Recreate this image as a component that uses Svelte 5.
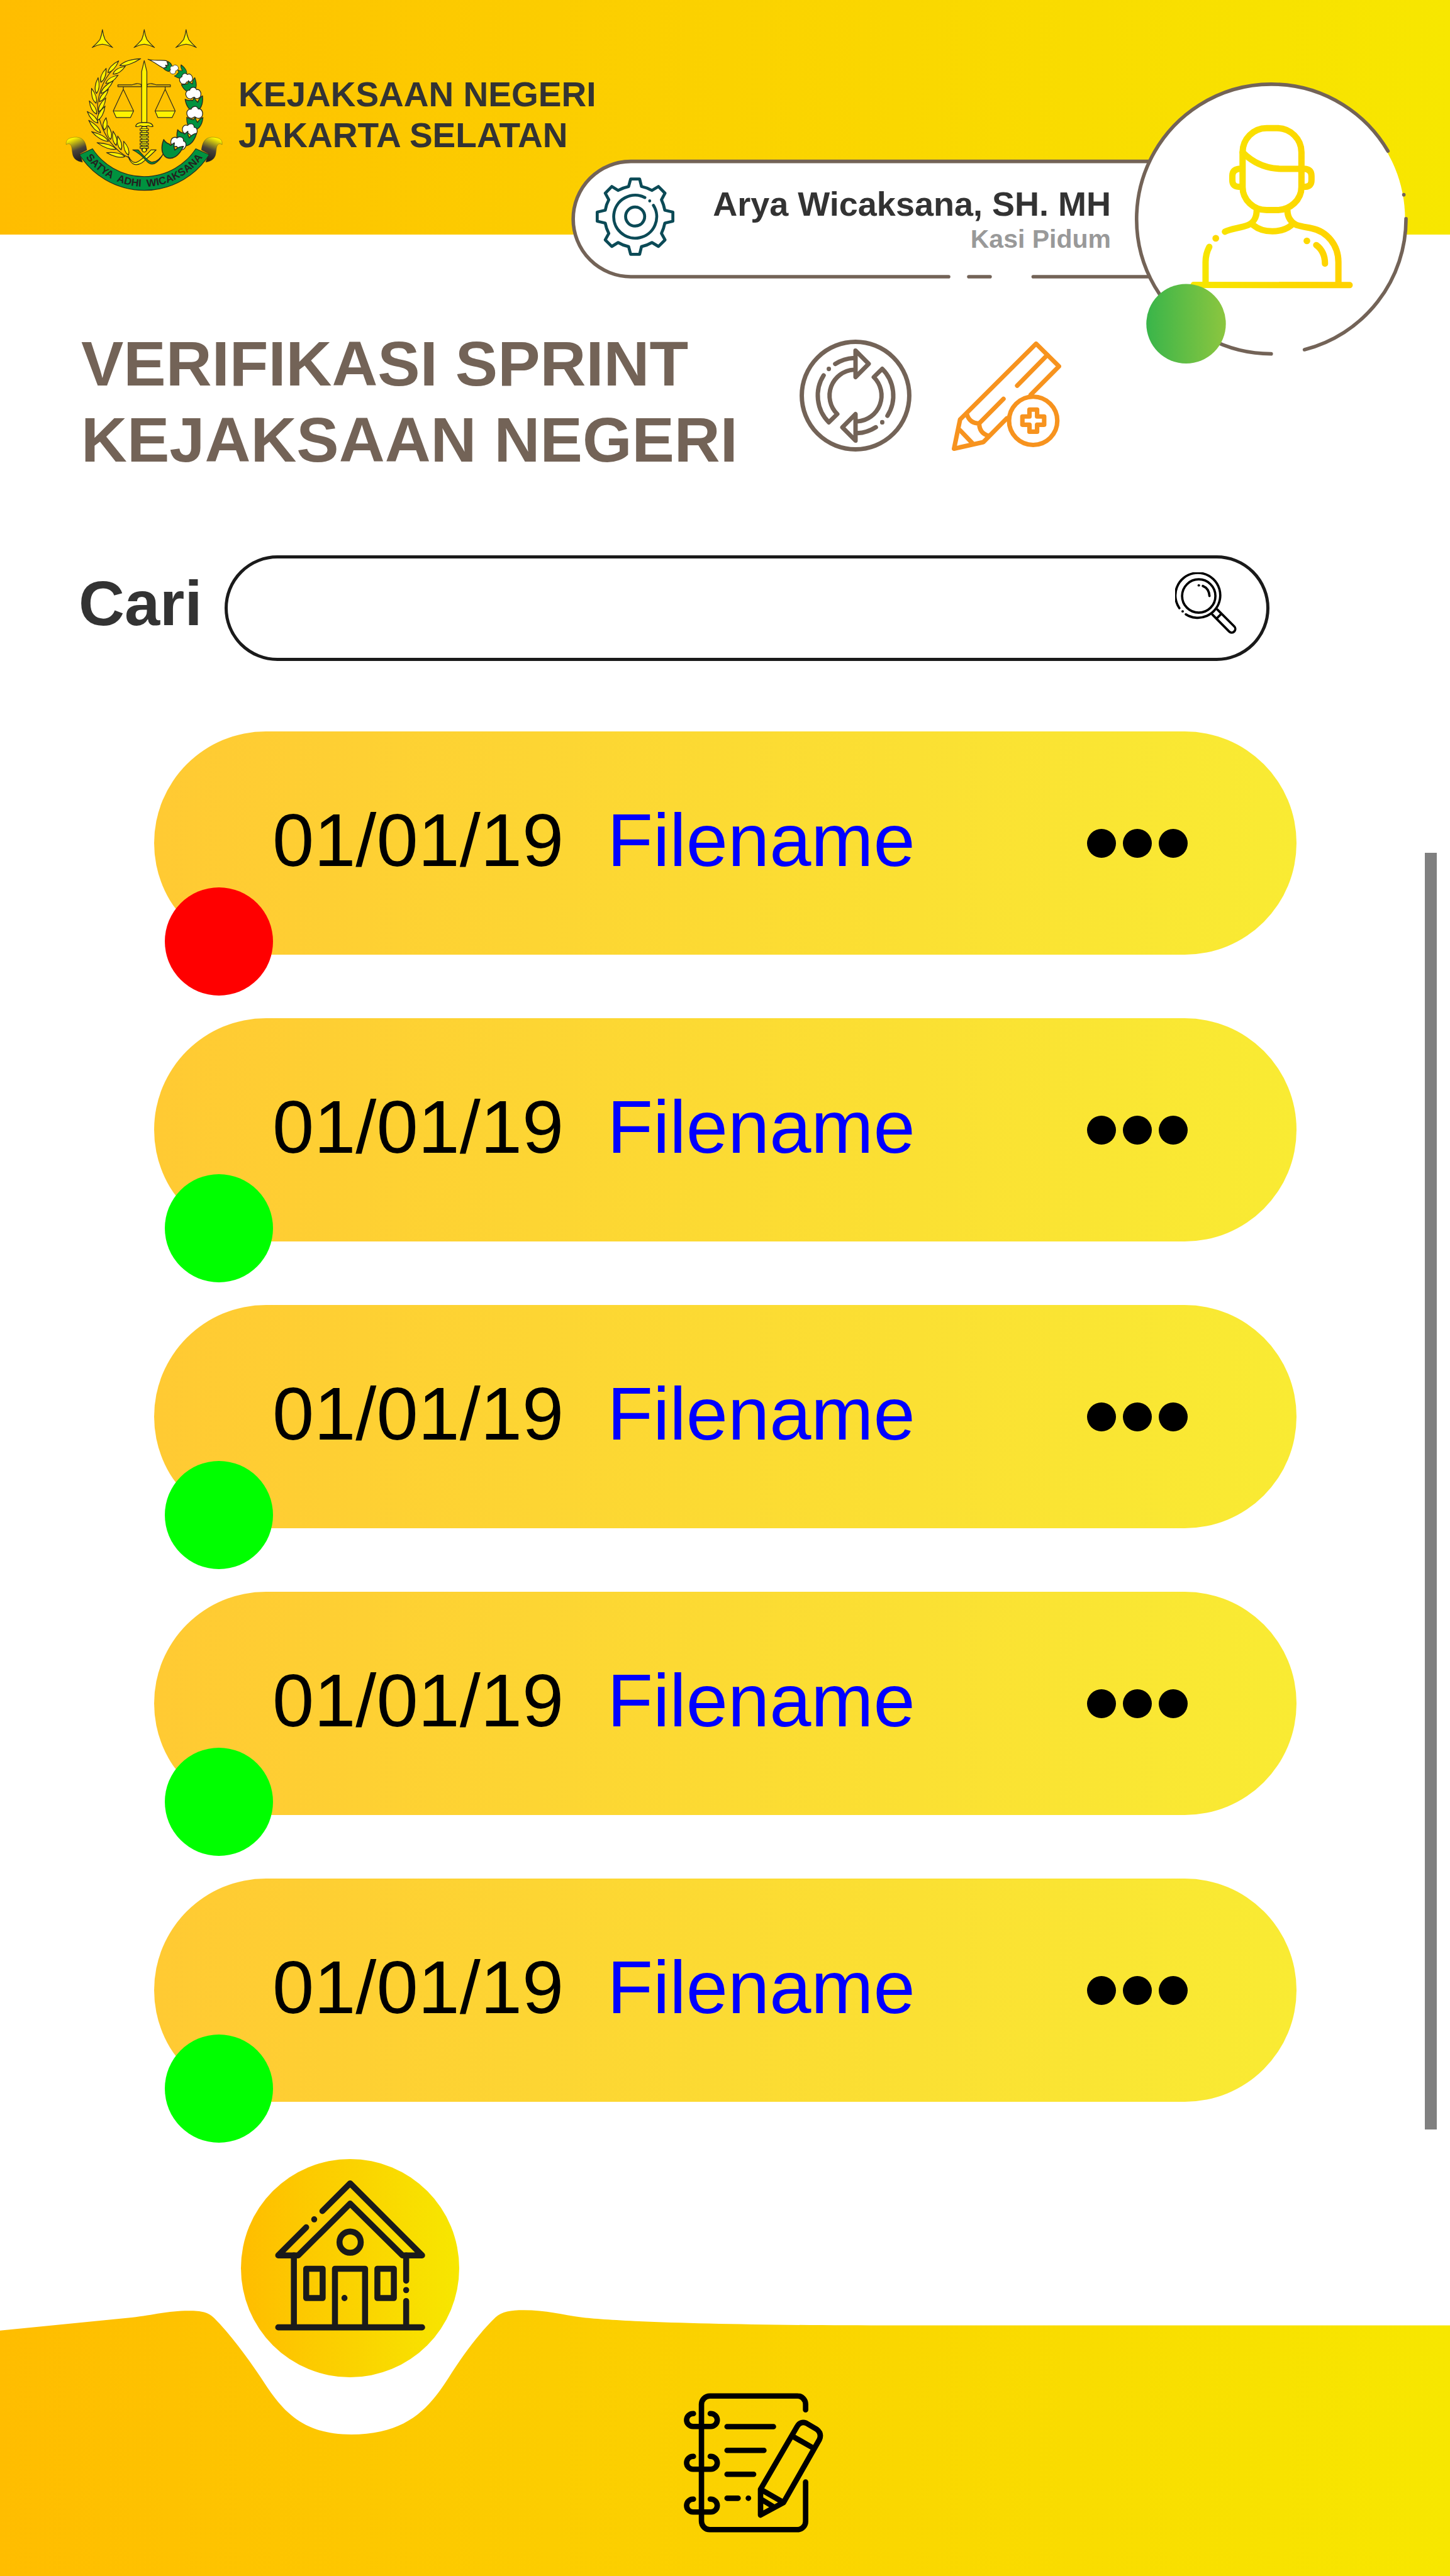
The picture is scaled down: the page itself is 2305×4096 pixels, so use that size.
<script>
  const files = [
    { date: '01/01/19', name: 'Filename', status: 'pending' },
    { date: '01/01/19', name: 'Filename', status: 'verified' },
    { date: '01/01/19', name: 'Filename', status: 'verified' },
    { date: '01/01/19', name: 'Filename', status: 'verified' },
    { date: '01/01/19', name: 'Filename', status: 'verified' }
  ];

  let query = $state('');

  // Wheat grains of the emblem: base x, base y, tip x, tip y
  const grains = [
    [278, 300, 335, 238], [240, 352, 268, 278], [216, 412, 225, 328],
    [214, 464, 190, 385], [217, 522, 178, 452], [224, 570, 167, 509],
    [238, 622, 175, 556], [280, 668, 191, 617], [322, 710, 220, 676],
    [368, 750, 271, 729], [342, 262, 452, 226], [305, 308, 371, 266],
    [266, 358, 332, 314], [240, 412, 306, 344], [232, 456, 280, 390],
    [228, 510, 266, 436], [222, 556, 262, 480], [258, 608, 268, 542],
    [292, 658, 278, 584], [322, 690, 305, 614], [348, 714, 330, 640],
    [388, 742, 362, 668]
  ].map(([x, y, tx, ty]) => ({
    x,
    y,
    angle: (Math.atan2(ty - y, tx - x) * 180) / Math.PI + 90,
    stretch: Math.hypot(tx - x, ty - y) / 64
  }));

  // Cotton bolls of the emblem, each with the cup that holds it
  const bolls = [
    { cotton: [634, 286, -50, 0.68], cup: [668, 303, -48, 0.85] },
    { cotton: [697, 339, -18, 0.92], cup: [714, 370, -16, 0.98] },
    { cotton: [735, 420, 0, 1.05], cup: [738, 464, 0, 1.15] },
    { cotton: [742, 524, 3, 1.1], cup: [738, 567, 12, 1.05] },
    { cotton: [714, 614, 20, 1.05], cup: [690, 646, 22, 1.25] },
    { cotton: [652, 684, 30, 1.1], cup: [612, 708, 30, 1.35] }
  ];
  const place = ([x, y, r, s]) => `translate(${x} ${y}) rotate(${r}) scale(${s})`;
</script>

<div class="page">
  <header class="top">
    <svg class="emblem" viewBox="50 60 842 875" role="img" aria-label="Lambang Kejaksaan">
      <defs>
        <linearGradient id="curl" x1="0" y1="0" x2="0.35" y2="1">
          <stop offset="0.15" stop-color="#fff200" />
          <stop offset="0.62" stop-color="#4a4238" />
          <stop offset="1" stop-color="#231f20" />
        </linearGradient>
        <path id="motto" d="M82 521A390 390 0 0 0 862 521" />
      </defs>
      <g fill="#fff200" stroke="#2b2a20" stroke-width="4" stroke-linejoin="round">
        {#each [0, 224, 448] as dx}
          <path transform="translate({dx})" d="M248 70Q252 100 262 123Q280 146 303 166Q276 151 248 148Q220 151 193 166Q216 146 235 123Q244 100 248 70Z" />
        {/each}
        <path fill="none" d="M300 288Q235 360 222 470Q224 580 290 672Q340 735 395 758" />
        {#each grains as g}
          <path
            transform="translate({g.x} {g.y}) rotate({g.angle}) scale(1 {g.stretch})"
            d="M0 0C-14 -14 -14 -38 0 -64C13 -38 13 -14 0 0Z"
          />
        {/each}
        <path d="M331 366H405C425 360 435 354 456 364V376H331Z" fill="#e8b800" />
        <path d="M612 366H538C518 360 508 354 487 364V376H612Z" fill="#e8b800" />
        <path fill="none" d="M360 376V390L306 506M360 390L415 506M584 376V390L530 506M584 390L638 506" />
        <path d="M306 506H415L398 541H322ZM530 506H638L621 541H545Z" />
        <path d="M459 590H486V716H459Z" />
        <path d="M450 601H494V611H450ZM450 621H494V631H450ZM450 640H494V650H450ZM450 659H494V669H450ZM450 678H494V688H450ZM450 696H494V706H450Z" />
        <circle cx="472" cy="715" r="11" />
        <path d="M472 236L458 295V568H486V295Z" />
        <path d="M426 588C430 570 448 568 472 568S514 570 519 588C506 594 500 584 490 585Q472 592 455 585C445 584 438 594 426 588Z" />
        <path d="M386 748Q410 790 432 780Q458 770 508 714H536Q480 768 460 783Q430 802 408 786Q392 772 386 748Z" />
        <path fill="#00923f" d="M572 738Q545 780 512 780Q492 776 440 714H410Q450 734 484 774Q510 802 536 782Q556 768 572 738Z" />
        <path fill="#fff" d="M492 229C530 240 565 230 592 237L600 262L578 278C555 268 535 248 492 229Z" />
        <path fill="#00923f" d="M598 240Q618 250 620 266Q614 290 602 294Q584 290 574 276L592 272L586 260L600 262Z" />
        {#each bolls as b}
          <path
            fill="#fff"
            transform={place(b.cotton)}
            d="M-36 6C-44 -12 -32 -26 -19 -24C-14 -40 8 -46 16 -27C30 -32 44 -14 36 8C28 20 18 20 10 16L0 12L-12 20C-22 20 -32 16 -36 6Z"
          />
          <path
            fill="#00923f"
            transform={place(b.cup)}
            d="M-41 -18C-36 16 -18 38 4 38C30 34 44 8 40 -34C28 -28 22 -16 18 -4L8 -14L2 -28L-6 -12L-14 -14Q-26 -10 -41 -18Z"
          />
        {/each}
        <g fill="url(#curl)" stroke-width="1">
          <path d="M54 686C50 655 75 646 110 646C150 648 160 680 165 715L128 735L142 780C110 776 92 760 88 735C84 710 86 695 74 683C68 680 60 682 54 686Z" />
          <path transform="translate(943) scale(-1 1)" d="M54 686C50 655 75 646 110 646C150 648 160 680 165 715L128 735L142 780C110 776 92 760 88 735C84 710 86 695 74 683C68 680 60 682 54 686Z" />
        </g>
        <path fill="#00923f" d="M125 740A412 412 0 0 0 820 740L748 708A331 331 0 0 1 195 708Z" />
      </g>
      <text class="motto" text-anchor="middle">
        <textPath href="#motto" startOffset="50%">SATYA&nbsp; ADHI&nbsp; WICAKSANA</textPath>
      </text>
    </svg>
    <p class="office">KEJAKSAAN NEGERI<br />JAKARTA SELATAN</p>

    <div class="profile">
      <svg class="frame" viewBox="1020 147 1494 502" aria-hidden="true">
        <defs>
          <linearGradient id="person" gradientUnits="userSpaceOnUse" x1="2140" y1="0" x2="2400" y2="0">
            <stop offset="0" stop-color="#f7e600" />
            <stop offset="1" stop-color="#ffd200" />
          </linearGradient>
          <linearGradient id="online">
            <stop offset="0" stop-color="#39b54a" />
            <stop offset="1" stop-color="#8cc63f" />
          </linearGradient>
        </defs>
        <path fill="#fff" d="M2100 288H1126.500A103 103 0 0 0 1126.500 494H2100Z" />
        <circle cx="2270" cy="391" r="239" fill="#fff" />
        <g fill="none" stroke="#736357" stroke-width="6.300" stroke-linecap="round">
          <path d="M2051 288H1126.500A103 103 0 0 0 1126.500 494H1694M1730 494H1768M1845 494H2051" />
          <path d="M2510.700 390.400A240.800 240.800 0 0 1 2329.400 624.300M2270 631.800A240.800 240.800 0 1 1 2478.400 269.600M2506.800 347.400V347.600" />
        </g>
        <g fill="none" stroke="url(#person)" stroke-width="11.300" stroke-linecap="round">
          <path d="M2262 228.600H2280A44 43 0 0 1 2324 271.800V333.600A44 41.400 0 0 1 2280 375H2262A43 41.400 0 0 1 2218.900 333.600V271.800A43 43 0 0 1 2262 228.600Z" />
          <path d="M2219 272C2238 291 2262 301.400 2290 301.400H2324" />
          <path d="M2217 301.400H2212Q2200.600 303 2200.600 314V322Q2200.600 333 2212 333.400H2217M2326 301.400H2331Q2341.900 303 2341.900 314V322Q2341.900 333 2331 333.400H2326" />
          <path d="M2244 376C2244 388 2238 398 2228 402C2215 407 2198 408 2187.400 413.600M2299 376C2299 388 2306 398 2316 402C2324 404.500 2332 405.500 2342 407.500C2370 413 2390 438 2390 468V507M2238 402C2256 416.500 2288 416.500 2306 402" />
          <path d="M2159.400 440.700Q2152.800 453 2152.800 468V507M2131.500 508.600L2410 509M2350.400 437.500C2362 446 2366 458 2366 470.700" />
        </g>
        <circle cx="2171" cy="425.400" r="6" fill="#fdd900" />
        <circle cx="2333.700" cy="430" r="6" fill="#fdd900" />
        <circle cx="2118" cy="578" r="71" fill="url(#online)" />
      </svg>
      <div class="account">
        <button class="icon-button gear" type="button" aria-label="Pengaturan">
          <svg viewBox="42 37 421 421" fill="none" stroke="#0b4a56" stroke-width="16" stroke-linecap="round" stroke-linejoin="round">
            <path d="M229 46H277L287 86Q316 92 343 107L378 86L413 122L394 157Q406 182 412 213L455 223V272L412 282Q406 312 394 337L413 372L378 407L343 386Q316 402 287 408L277 449H229L218 408Q188 402 162 386L128 407L93 372L112 337Q98 312 93 282L50 272V223L93 213Q98 182 112 157L93 122L128 86L162 107Q188 92 218 86Z" />
            <circle cx="253" cy="247" r="51" />
            <path d="M351 187A115 115 0 1 1 305 145M331 163V163.500" />
          </svg>
        </button>
        <div class="who">
          <strong>Arya Wicaksana, SH. MH</strong>
          <span>Kasi Pidum</span>
        </div>
      </div>
    </div>
  </header>

  <section class="title">
    <h1>VERIFIKASI SPRINT<br />KEJAKSAAN NEGERI</h1>
    <button class="icon-button refresh" type="button" aria-label="Muat ulang">
      <svg viewBox="-100 -100 200 200" fill="none" stroke="#736357" stroke-width="7.800" stroke-linecap="round" stroke-linejoin="round">
        <circle r="96" />
        {#each [0, 180] as turn}
          <path
            transform="rotate({turn})"
            d="M0 -80.500L23.500 -56.700L0 -33ZM-3 -67.200A67.300 67.300 0 0 0 -36.300 -56.500M-47.700 -47.900V-47.500M-57 -36A67.400 67.400 0 0 0 -47.700 47.700L-32.600 33A46.300 46.300 0 0 1 -3 -46.200"
          />
        {/each}
      </svg>
    </button>
    <button class="icon-button add" type="button" aria-label="Tambah sprint">
      <svg viewBox="0 0 195 195" fill="none" stroke="#f7931e" stroke-width="8" stroke-linecap="round" stroke-linejoin="round">
        <path d="M140.600 95L191 44.300L150.200 4L14.800 139L4 191L56.200 179.300L98 137" />
        <path d="M170.200 24L116.500 78.700M92.100 102.300L48.800 146M27 130Q32 146 48.800 146Q49 163 65 168M14.500 158L36.500 181" />
        <circle cx="145" cy="141.300" r="43" />
        <path d="M138.400 121.300H152V133.700H164.600V148.300H152V160.700H138.400V148.300H125.800V133.700H138.400Z" />
      </svg>
    </button>
  </section>

  <form class="search" role="search" onsubmit={(e) => e.preventDefault()}>
    <label for="query">Cari</label>
    <div class="field">
      <input id="query" type="text" bind:value={query} />
      <button class="icon-button find" type="submit" aria-label="Cari berkas">
        <svg viewBox="0 0 111 111" fill="none" stroke="#000" stroke-width="4.200" stroke-linecap="round" stroke-linejoin="round">
          <circle cx="42.600" cy="42.700" r="30" />
          <path d="M19.400 75.700A40.400 40.400 0 1 0 7.700 64.500M13.400 70.300H13.800M42.400 23.500H43M50 24.600Q61 29 61.900 42.700" />
          <path d="M76 67L106.500 97.400A6.500 6.500 0 0 1 97.300 106.600L67 76M83.500 74.500L74.500 83.500" />
        </svg>
      </button>
    </div>
  </form>

  <main class="content">
    <ul class="files">
      {#each files as file}
        <li class="card">
          <span class="date">{file.date}</span>
          <a class="name" href="#berkas">{file.name}</a>
          <button class="icon-button more" type="button" aria-label="Menu berkas">
            <i></i><i></i><i></i>
          </button>
          <span class="status {file.status}"></span>
        </li>
      {/each}
    </ul>
    <div class="thumb"></div>
  </main>

  <footer class="bottom">
    <svg class="wave" viewBox="0 4126 2589 475" preserveAspectRatio="none" aria-hidden="true">
      <defs>
        <linearGradient id="bar">
          <stop offset="0" stop-color="#ffbd00" />
          <stop offset="1" stop-color="#f7e700" />
        </linearGradient>
      </defs>
      <path
        fill="url(#bar)"
        d="M0 4162.700L235 4139.500C275 4135 300 4127.300 337 4127.300C360 4127.300 372 4130 382 4140C410 4168 440 4208 466 4247C500 4300 535 4348.400 627 4348.400C727 4348.400 767 4300 801 4247C827 4206 855 4168 885 4139C896 4129 912 4126.400 935 4126.400C975 4126.400 1005 4135 1037 4139C1100 4147 1300 4153.600 1600 4153.600H2589V4601H0Z"
      />
    </svg>
    <nav>
      <a class="home" href="#beranda" aria-label="Beranda">
        <svg viewBox="0 0 390 390" fill="none" stroke="#1a1a1a" stroke-width="10.700" stroke-linecap="round" stroke-linejoin="round">
          <path d="M145.500 93L195.100 43.500L323.700 172.200H288.500L195.100 79.600L102.400 172.200H66.600L116.600 122M130.900 107.700V108" />
          <path d="M66.600 300.800H323.700M94.600 172.200V300M295.200 172.200V217.400M295.200 234V234.400M295.200 253.700V300M168 300V196H221.800V300M185 248.200V248.600" />
          <path d="M116.600 196H146V248.400H116.600ZM243.800 196H273.200V248.400H243.800Z" />
          <circle cx="195.100" cy="148.500" r="19" />
        </svg>
      </a>
      <a class="notes" href="#catatan" aria-label="Catatan">
        <svg viewBox="122 102 746 747" fill="none" stroke="#000" stroke-width="29" stroke-linecap="round" stroke-linejoin="round">
          <path d="M773 192V162A44 44 0 0 0 729 118H261A45 45 0 0 0 216 162V788A45 45 0 0 0 261 833H729A44 44 0 0 0 773 788V578" />
          {#each [0, 229, 458] as dy}
            <path transform="translate(0 {dy})" d="M173 212H171A34.500 34.500 0 0 0 171 281H266A34.500 34.500 0 0 0 266 212H263" />
          {/each}
          <path d="M353 282H601M353 409H550M353 537H495M353 665H412M466.500 665H467.500" />
          <path d="M532 755V617L728 281Q745 252 776 263L832 296Q861 318 847 351L655 688ZM706 335L813 396M540 622L650 685M536 671L597 708" />
        </svg>
      </a>
    </nav>
  </footer>
</div>

<style>
  :global(body) {
    margin: 0;
    background: #fff;
  }

  .page {
    display: flex;
    flex-direction: column;
    min-height: 100vh;
    font-family: 'Liberation Sans', Arial, sans-serif;
    color: #333;
  }

  svg {
    display: block;
    width: 100%;
    height: 100%;
  }

  .icon-button {
    padding: 0;
    border: 0;
    background: none;
    flex: none;
    cursor: pointer;
  }

  .top {
    position: relative;
    display: flex;
    align-items: flex-start;
    gap: 25px;
    box-sizing: border-box;
    height: 373px;
    padding: 44px 104px 0;
    background: linear-gradient(90deg, #ffbd00, #f7e700);
  }

  .emblem {
    flex: none;
    width: 250px;
    height: 260px;
  }

  .motto {
    font-size: 56px;
    font-weight: 700;
    fill: #231f20;
  }

  .office {
    margin: 74px 0 0;
    font-size: 55px;
    font-weight: 700;
    line-height: 65px;
  }

  .profile {
    position: absolute;
    top: 131px;
    right: 67px;
    width: 1330px;
    height: 447px;
  }

  .frame {
    position: absolute;
    inset: 0;
  }

  .account {
    position: relative;
    display: flex;
    justify-content: space-between;
    align-items: flex-start;
    padding: 151px 472px 0 39px;
  }

  .gear {
    width: 125px;
    height: 125px;
  }

  .who {
    display: flex;
    flex-direction: column;
    padding-top: 13px;
    text-align: right;
    white-space: nowrap;
  }

  .who strong {
    font-size: 54px;
    line-height: 58px;
  }

  .who span {
    font-size: 41px;
    font-weight: 700;
    line-height: 54px;
    color: #999;
  }

  .title {
    display: flex;
    align-items: flex-start;
    padding: 145px 129px 0;
  }

  h1 {
    margin: 0 98px 0 0;
    font-size: 101px;
    line-height: 121px;
    color: #736357;
    white-space: nowrap;
  }

  .refresh {
    width: 178px;
    height: 178px;
    margin-top: 22px;
  }

  .add {
    width: 174px;
    height: 174px;
    margin: 25px 0 0 64px;
  }

  .search {
    display: flex;
    align-items: center;
    gap: 36px;
    margin-top: 123px;
    padding: 0 287px 0 125px;
  }

  label {
    padding-bottom: 16px;
    font-size: 101px;
    font-weight: 700;
    line-height: 120px;
  }

  .field {
    flex: 1;
    display: flex;
    box-sizing: border-box;
    height: 168px;
    padding: 22px 47px 0 80px;
    border: 5px solid #1a1a1a;
    border-radius: 84px;
  }

  input {
    flex: 1;
    min-width: 0;
    height: 110px;
    padding: 0;
    border: 0;
    outline: 0;
    background: none;
    font: inherit;
    font-size: 80px;
  }

  .find {
    width: 98px;
    height: 98px;
  }

  .content {
    display: flex;
    align-items: flex-start;
    margin-top: 112px;
    padding: 0 21px 0 245px;
  }

  .files {
    flex: 1;
    display: flex;
    flex-direction: column;
    gap: 101px;
    margin: 0;
    padding: 0;
    list-style: none;
  }

  .card {
    position: relative;
    display: flex;
    align-items: center;
    gap: 69px;
    box-sizing: border-box;
    height: 355px;
    padding: 0 173px 0 188px;
    border-radius: 178px;
    background: linear-gradient(90deg, #ffca33, #f9eb33);
    font-size: 119px;
    line-height: 136px;
  }

  .date,
  .name {
    padding-bottom: 10px;
  }

  .date {
    color: #000;
  }

  .name {
    color: #00f;
    text-decoration: none;
  }

  .more {
    display: flex;
    gap: 11px;
    margin-left: auto;
  }

  .more i {
    width: 46px;
    height: 46px;
    border-radius: 50%;
    background: #000;
  }

  .status {
    position: absolute;
    left: 17px;
    bottom: -65px;
    width: 172px;
    height: 172px;
    border-radius: 50%;
  }

  .pending {
    background: #f00;
  }

  .verified {
    background: #0f0;
  }

  .thumb {
    flex: none;
    width: 19px;
    height: 2030px;
    margin: 193px 0 0 204px;
    background: #808080;
  }

  .bottom {
    position: relative;
    height: 663px;
    margin-top: auto;
  }

  .wave {
    position: absolute;
    left: 0;
    bottom: 0;
    height: 423px;
  }

  nav {
    position: relative;
    display: flex;
    align-items: flex-start;
    gap: 357px;
    padding-left: 383px;
  }

  .home {
    width: 347px;
    height: 347px;
    border-radius: 50%;
    background: linear-gradient(90deg, #ffbd00, #f7e700);
  }

  .notes {
    width: 222px;
    height: 222px;
    margin-top: 372px;
  }
</style>
